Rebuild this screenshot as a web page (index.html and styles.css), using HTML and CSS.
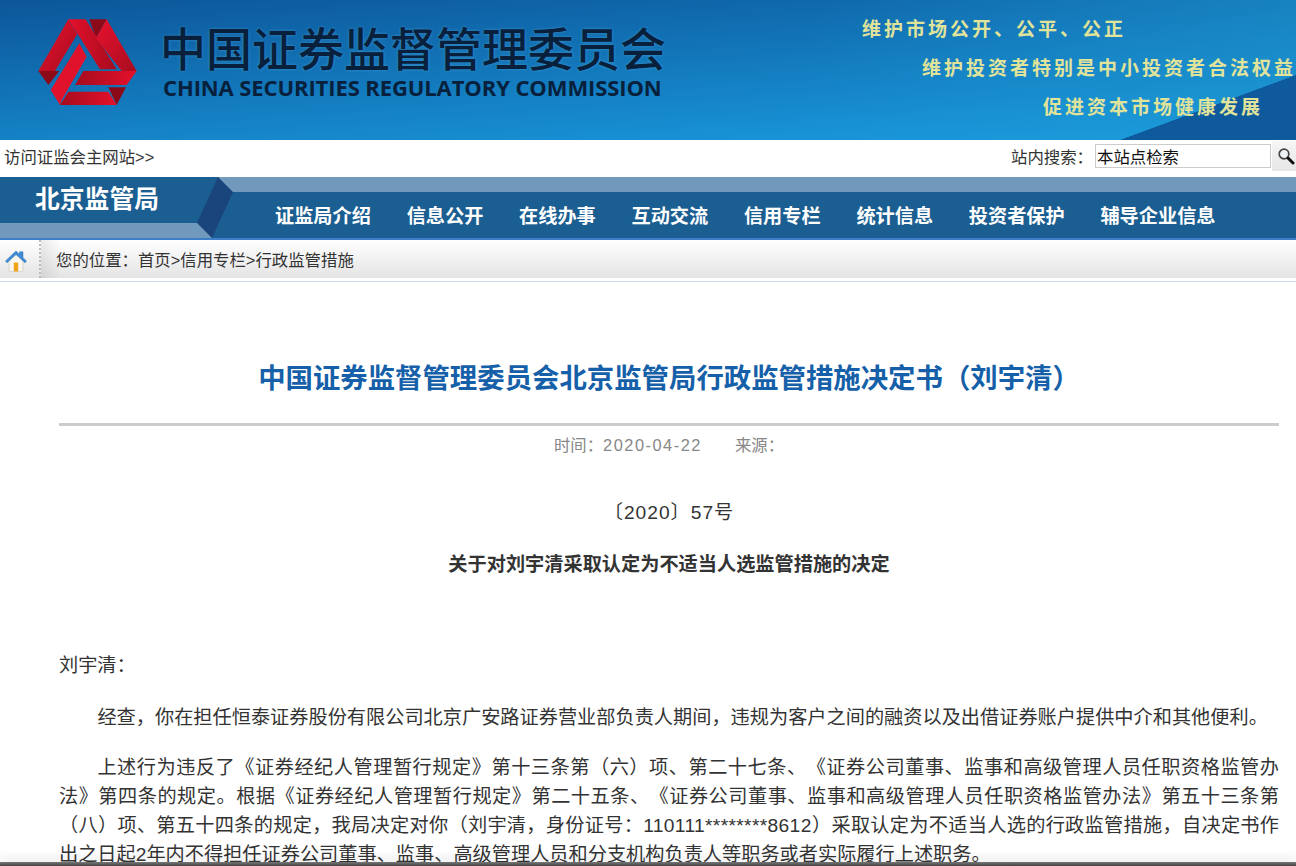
FILE: index.html
```html
<!DOCTYPE html>
<html lang="zh-CN">
<head>
    <meta charset="UTF-8">
    <title>中国证券监督管理委员会北京监管局行政监管措施决定书（刘宇清）</title>
    <link rel="stylesheet" href="styles.css">
</head>
<body>
    <header class="banner">
        <svg class="logo" viewBox="0 0 390 315" width="130" height="105">
            <defs>
                <linearGradient id="redA" x1="0" y1="0" x2="1" y2="1">
                    <stop offset="0" stop-color="#e8112d"/>
                    <stop offset="1" stop-color="#a80d20"/>
                </linearGradient>
                <linearGradient id="redB" x1="0" y1="0" x2="1" y2="0">
                    <stop offset="0" stop-color="#a50c1e"/>
                    <stop offset="1" stop-color="#e5102b"/>
                </linearGradient>
                <linearGradient id="redC" x1="0" y1="0" x2="1" y2="0">
                    <stop offset="0" stop-color="#e5102b"/>
                    <stop offset="1" stop-color="#a50c1e"/>
                </linearGradient>
            </defs>
            <polygon points="208,28 260,28 228,85" fill="#8c0a18"/>
            <polygon points="55,183 118,183 85,225" fill="#8c0a18"/>
            <polygon points="265,232 318,232 290,285" fill="#8c0a18"/>
            <polygon points="145,28 172,72 105,183 55,183" fill="url(#redA)"/>
            <polygon points="145,28 197,28 290,178 240,178" fill="url(#redC)"/>
            <polygon points="260,28 350,183 305,183 228,85" fill="url(#redA)"/>
            <polygon points="190,183 350,183 320,225 165,225" fill="url(#redB)"/>
            <polygon points="145,245 265,245 290,285 120,285" fill="url(#redB)"/>
            <polygon points="178,100 200,140 125,270 120,285 92,240" fill="#e0122c"/>
        </svg>
        <div class="brand">
            <div class="brand-cn">中国证券监督管理委员会</div>
            <div class="brand-en">CHINA SECURITIES REGULATORY COMMISSION</div>
        </div>
        <div class="slogans">
            <p class="slogan-1">维护市场公开、公平、公正</p>
            <p class="slogan-2">维护投资者特别是中小投资者合法权益</p>
            <p class="slogan-3">促进资本市场健康发展</p>
        </div>
    </header>

    <div class="topbar">
        <a class="main-link" href="#">访问证监会主网站&gt;&gt;</a>
        <form class="search">
            <label for="q">站内搜索：</label>
            <input id="q" type="text" value="本站点检索">
            <button type="button" aria-label="搜索">
                <svg viewBox="0 0 18 18" width="18" height="18">
                    <circle cx="7" cy="7" r="4.800" fill="#eef3f6" stroke="#444" stroke-width="1.700"/>
                    <path d="M11 11l5 5" stroke="#111" stroke-width="3" stroke-linecap="round"/>
                </svg>
            </button>
        </form>
    </div>

    <nav class="nav">
        <div class="nav-title">
            <svg viewBox="0 0 233 61" width="233" height="61">
                <rect x="0" y="0" width="218" height="46" fill="#1b5e91"/>
                <rect x="0" y="46" width="212" height="15" fill="#7099bc"/>
                <polygon points="218,0 233,15 212,61 197,46" fill="#19457c"/>
            </svg>
            <span>北京监管局</span>
        </div>
        <ul class="menu">
            <li>证监局介绍</li>
            <li>信息公开</li>
            <li>在线办事</li>
            <li>互动交流</li>
            <li>信用专栏</li>
            <li>统计信息</li>
            <li>投资者保护</li>
            <li>辅导企业信息</li>
        </ul>
    </nav>

    <div class="crumbs">
        <div class="home">
            <svg viewBox="0 0 22 22" width="22" height="22">
                <path d="M4 10v10.500a1 1 0 0 0 1 1h12a1 1 0 0 0 1-1V10L11 4z" fill="#f8f6ee" stroke="#c8c8ba" stroke-width="0.600"/>
                <rect x="8.800" y="12.500" width="4.400" height="9" rx="0.800" fill="#f2a31c"/>
                <path d="M0.500 11L11 1l3.500 3.300V1.800h3.500v6L21.500 11l-1.500 1.800L11 4.600 2 12.800z" fill="#3d8bd4" stroke="#2f74b8" stroke-width="0.500" stroke-linejoin="round"/>
            </svg>
        </div>
        <div class="path">您的位置：首页&gt;信用专栏&gt;行政监管措施</div>
    </div>

    <main class="article">
        <h1>中国证券监督管理委员会北京监管局行政监管措施决定书（刘宇清）</h1>
        <div class="meta"><span>时间：<span class="date">2020-04-22</span></span><span>来源：</span></div>
        <p class="doc-no">〔2020〕57号</p>
        <p class="doc-title">关于对刘宇清采取认定为不适当人选监管措施的决定</p>
        <p class="to">刘宇清：</p>
        <p class="para">经查，你在担任恒泰证券股份有限公司北京广安路证券营业部负责人期间，违规为客户之间的融资以及出借证券账户提供中介和其他便利。</p>
        <p class="para">上述行为违反了《证券经纪人管理暂行规定》第十三条第（六）项、第二十七条、《证券公司董事、监事和高级管理人员任职资格监管办法》第四条的规定。根据《证券经纪人管理暂行规定》第二十五条、《证券公司董事、监事和高级管理人员任职资格监管办法》第五十三条第（八）项、第五十四条的规定，我局决定对你（刘宇清，身份证号：<span class="id-no">110111********8612</span>）采取认定为不适当人选的行政监管措施，自决定书作出之日起2年内不得担任证券公司董事、监事、高级管理人员和分支机构负责人等职务或者实际履行上述职务。</p>
    </main>

    <div class="window-edge"></div>
</body>
</html>
```

FILE: styles.css
```css
html, body {
    margin: 0;
    padding: 0;
    height: 866px;
    overflow: hidden;
}
body {
    font-family: "Liberation Sans", "Noto Sans CJK SC", sans-serif;
    font-size: 16.4px;
    color: #333;
    background-color: #fff;
    text-spacing-trim: space-all;
}
p {
    margin: 0;
}
.banner {
    display: flex;
    height: 140px;
    background:
        linear-gradient(to bottom right, transparent 49.8%, #0f5a9c 50.2%) right bottom / 176px 65px no-repeat,
        linear-gradient(100deg, transparent 62%, rgba(32, 150, 205, 0.45) 100%),
        linear-gradient(176deg, #0c5699 0, #1a9fe2 100%);
}
.logo {
    flex: none;
    margin: 10px 10px 0 20px;
}
.brand {
    padding-top: 19px;
    width: 516px;
}
.brand-cn {
    font-family: "Noto Sans CJK SC", sans-serif;
    font-size: 46px;
    font-weight: 500;
    line-height: 54px;
    color: #08203c;
    text-shadow: 0 0 3px rgba(140, 215, 255, 0.35);
    white-space: nowrap;
}
.brand-en {
    font-family: "Open Sans", sans-serif;
    font-size: 22px;
    font-weight: 700;
    line-height: 26px;
    margin-top: 1px;
    margin-left: 3px;
    color: #08203c;
    letter-spacing: -0.1px;
    white-space: nowrap;
}
.slogans {
    flex: 1;
    font-family: "Noto Sans CJK SC", sans-serif;
    font-size: 19px;
    font-weight: 700;
    letter-spacing: 3px;
    line-height: 39px;
    color: #e0e39a;
    padding-top: 8px;
    white-space: nowrap;
}
.slogan-1 { padding-left: 186px; }
.slogan-2 { padding-left: 246px; }
.slogan-3 { padding-left: 367px; }
.topbar {
    display: flex;
    justify-content: space-between;
    align-items: center;
    box-sizing: border-box;
    height: 37px;
    padding: 0 0 5px 4px;
}
.main-link {
    color: #333;
    text-decoration: none;
}
.search {
    display: flex;
    align-items: center;
}
.search label {
    margin-right: 2px;
}
.search input {
    box-sizing: border-box;
    width: 176px;
    height: 24px;
    padding: 0 1px;
    border: 1px solid #ccc;
    font: inherit;
    color: #111;
}
.search button {
    box-sizing: border-box;
    width: 24px;
    height: 30px;
    margin-left: 1px;
    padding: 0 0 0 5px;
    border: 0;
    background: linear-gradient(#f6f6f6, #e6e6e6);
    display: flex;
    align-items: center;
}
.nav {
    display: flex;
    height: 61px;
    background: linear-gradient(#7099bc 15px, #1b5e91 15px);
    border-bottom: 2px solid #3f7fc8;
}
.nav-title {
    position: relative;
    flex: none;
    width: 233px;
    height: 61px;
}
.nav-title svg {
    display: block;
}
.nav-title span {
    position: absolute;
    left: 35px;
    top: 8px;
    font-size: 24.8px;
    font-weight: 700;
    line-height: 30px;
    color: #fff;
}
.menu {
    display: flex;
    gap: 35.7px;
    margin: 0;
    padding: 26px 0 0 42px;
    list-style: none;
    font-size: 19.2px;
    font-weight: 700;
    line-height: 28px;
    color: #fff;
}
.crumbs {
    display: flex;
    height: 38px;
    background: linear-gradient(#fff, #e4e4e4);
    margin-bottom: 3px;
    box-shadow: 0 3px 0 #fff, 0 4px 0 #c9dcf0;
}
.home {
    box-sizing: border-box;
    width: 41px;
    padding: 10px 0 0 5px;
    border-right: 2px dotted #bbb;
}
.path {
    flex: 1;
    padding-left: 15px;
    line-height: 40px;
    background: linear-gradient(90deg, rgba(0, 0, 0, 0.08), transparent 20px);
}
.article {
    padding: 78px 17px 0 59px;
    margin-top: 1px;
}
.article h1 {
    margin: 0;
    padding-bottom: 24px;
    border-bottom: 3px solid #ccc;
    font-size: 27.4px;
    font-weight: 700;
    line-height: 40px;
    color: #1560a8;
    text-align: center;
}
.meta {
    display: flex;
    justify-content: center;
    gap: 33px;
    margin-top: 7px;
    line-height: 24px;
    color: #888;
}
.date {
    letter-spacing: 1.5px;
}
.doc-no {
    margin-top: 41px;
    font-size: 19.2px;
    line-height: 30px;
    letter-spacing: 1px;
    text-align: center;
}
.doc-title {
    margin-top: 22px;
    font-size: 19.2px;
    font-weight: 700;
    line-height: 30px;
    text-align: center;
}
.to {
    margin-top: 71px;
    font-size: 19.2px;
    line-height: 30px;
}
.para {
    margin-top: 22px;
    font-size: 19.2px;
    line-height: 29px;
    text-indent: 2em;
    text-align: justify;
}
.para + .para {
    margin-top: 21px;
}
.id-no {
    letter-spacing: 0.35px;
}
.window-edge {
    position: fixed;
    left: 0;
    right: 0;
    bottom: 0;
    height: 4px;
    background: linear-gradient(#777, #444);
    box-shadow: 0 -4px 8px rgba(0, 0, 0, 0.12);
}
```
